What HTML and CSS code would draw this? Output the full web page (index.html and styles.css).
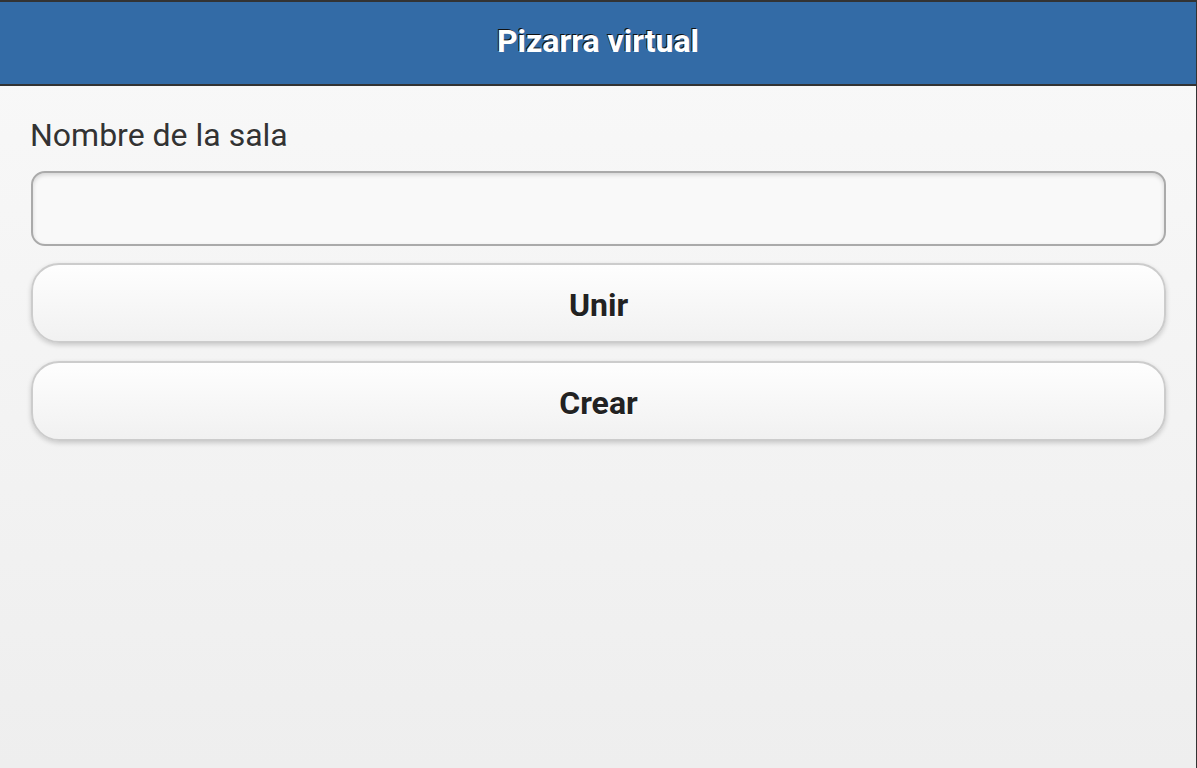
FILE: index.html
```html
<!DOCTYPE html>
<html lang="es">
<head>
<meta charset="utf-8">
<title>Pizarra virtual</title>
<link rel="stylesheet" href="styles.css">
</head>
<body>
<div class="page">
  <header class="header">
    <h1 class="title">Pizarra virtual</h1>
  </header>
  <main class="content">
    <label class="label" for="sala">Nombre de la sala</label>
    <input class="input" id="sala" type="text">
    <button class="btn" type="button">Unir</button>
    <button class="btn" type="button">Crear</button>
  </main>
</div>
</body>
</html>
```

FILE: styles.css
```css
html, body {
  margin: 0;
  padding: 0;
  height: 100%;
}
body {
  font-family: Roboto, "Liberation Sans", sans-serif;
  background: #333;
}
.page {
  width: 1196px;
  height: 768px;
  display: flex;
  flex-direction: column;
  background: linear-gradient(#f9f9f9, #eeeeee);
}
.header {
  border-top: 2px solid #333;
  border-bottom: 2px solid #333;
  background: #336ba6;
  height: 82px;
  display: flex;
  align-items: center;
  justify-content: center;
}
.title {
  margin: 0 0 4px;
  color: #fff;
  font-size: 32px;
  font-weight: 700;
  text-shadow: -1px -1px 0 #111;
  line-height: 40px;
}
.content {
  display: flex;
  flex-direction: column;
  padding: 29px 30px 0 31px;
}
.label {
  margin-left: -1px;
  font-size: 32px;
  line-height: 40px;
  color: #333;
  text-shadow: 0 1px 0 #fff;
}
.input {
  margin-top: 16px;
  height: 75px;
  box-sizing: border-box;
  border: 2px solid #aaa;
  border-radius: 14px;
  background: #f9f9f9;
  box-shadow: inset 0 2px 4px rgba(0,0,0,.15);
  font: inherit;
  font-size: 28px;
  padding: 0 14px;
  outline: none;
}
.btn {
  margin-top: 17px;
  height: 80px;
  box-sizing: border-box;
  padding: 4px 0 0;
  border: 2px solid #ccc;
  border-radius: 28px;
  background: linear-gradient(#fefefe, #f1f1f1);
  box-shadow: 0 2px 5px rgba(0,0,0,.18);
  font-family: inherit;
  font-size: 32px;
  font-weight: 700;
  color: #222;
  text-shadow: 0 1px 0 #fff;
  cursor: pointer;
}
.btn + .btn {
  margin-top: 18px;
}
```
